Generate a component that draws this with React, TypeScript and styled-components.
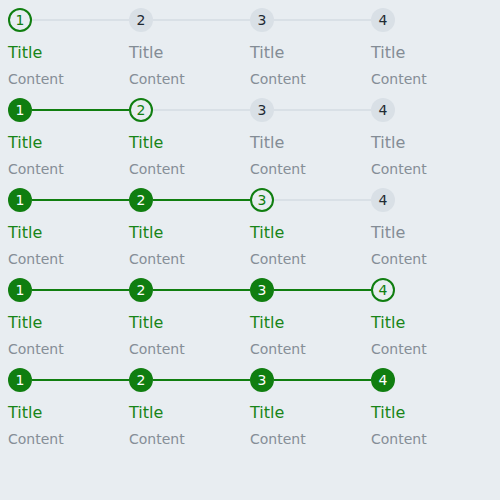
import React from "react";
import styled, { createGlobalStyle } from "styled-components";

const Global = createGlobalStyle`
  html, body { margin: 0; padding: 0; background: #e8edf1; }
  body { font-family: "DejaVu Sans", sans-serif; }
`;

const Page = styled.div`
  padding: 8px;
  display: flex;
  flex-direction: column;
`;

const Stepper = styled.div`
  display: flex;
  height: 90px;
`;

const Step = styled.div`
  flex: 1;
  display: flex;
  flex-direction: column;
`;

const Header = styled.div`
  display: flex;
  align-items: center;
  height: 24px;
`;

type State = "done" | "active" | "todo";

const Circle = styled.div<{ $state: State }>`
  box-sizing: border-box;
  width: 24px;
  height: 24px;
  border-radius: 50%;
  display: flex;
  align-items: center;
  justify-content: center;
  font-size: 14px;
  flex: none;
  background: ${(p) => (p.$state === "done" ? "#107e10" : p.$state === "active" ? "transparent" : "#d9e0e6")};
  border: ${(p) => (p.$state === "active" ? "2px solid #107e10" : "none")};
  color: ${(p) => (p.$state === "done" ? "#ffffff" : p.$state === "active" ? "#107e10" : "#1f2a33")};
`;

const Line = styled.div<{ $done: boolean }>`
  flex: 1;
  height: 2px;
  background: ${(p) => (p.$done ? "#107e10" : "#d9e0e6")};
`;

const Title = styled.div<{ $on: boolean }>`
  margin-top: 11px;
  font-size: 16px;
  line-height: 20px;
  color: ${(p) => (p.$on ? "#188518" : "#838c95")};
`;

const Content = styled.div`
  margin-top: 7px;
  font-size: 14px;
  line-height: 18px;
  color: #858e97;
`;

export default function App() {
  const rows = [0, 1, 2, 3, 4];
  return (
    <>
      <Global />
      <Page>
        {rows.map((cur) => (
          <Stepper key={cur}>
            {[0, 1, 2, 3].map((i) => {
              const state: State = i < cur ? "done" : i === cur ? "active" : "todo";
              return (
                <Step key={i}>
                  <Header>
                    <Circle $state={state}>{i + 1}</Circle>
                    {i < 3 && <Line $done={i < cur} />}
                  </Header>
                  <Title $on={i <= cur}>Title</Title>
                  <Content>Content</Content>
                </Step>
              );
            })}
          </Stepper>
        ))}
      </Page>
    </>
  );
}
